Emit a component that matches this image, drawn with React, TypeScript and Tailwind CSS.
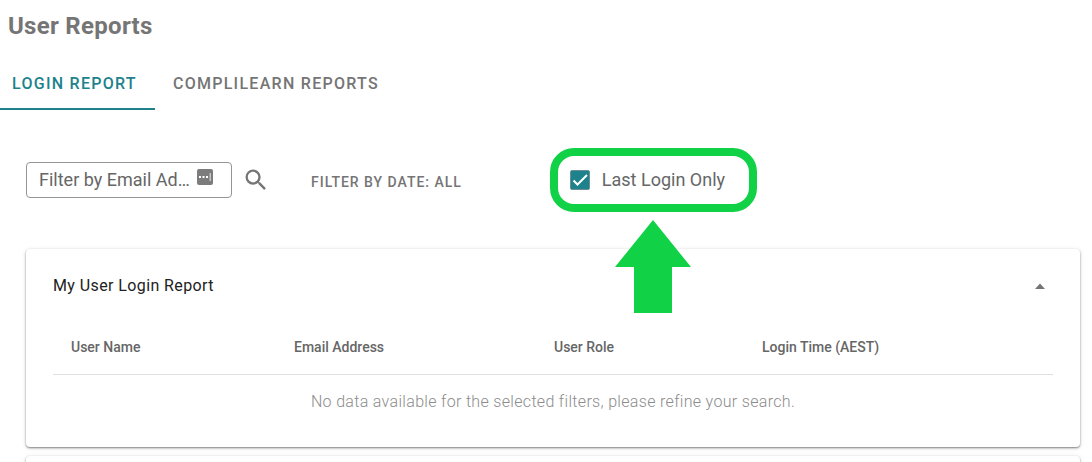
import { useState } from 'react'

const TABS = [
  { key: 'login',       label: 'Login Report' },
  { key: 'complilearn', label: 'Complilearn Reports' },
]

const COLUMNS = [
  { label: 'User Name',         width: 'w-[22.3%]' },
  { label: 'Email Address',     width: 'w-[26%]' },
  { label: 'User Role',         width: 'w-[20.8%]' },
  { label: 'Login Time (AEST)', width: 'w-[30.9%]' },
]

const CARD = 'rounded bg-white shadow-[0_1px_2px_rgba(0,0,0,0.45),0_1px_5px_rgba(0,0,0,0.12)]'

function SearchIcon() {
  return (
    <svg viewBox="0 0 24 24" className="h-7 w-7" fill="currentColor" aria-hidden="true">
      <path d="M15.5 14h-.79l-.28-.27A6.47 6.47 0 0 0 16 9.5 6.5 6.5 0 1 0 9.5 16c1.61 0 3.09-.59 4.23-1.57l.27.28v.79l5 4.99L20.49 19l-4.99-5zm-6 0C7.01 14 5 11.99 5 9.5S7.01 5 9.5 5 14 7.01 14 9.5 11.99 14 9.5 14z" />
    </svg>
  )
}

function AutofillIcon() {
  return (
    <svg viewBox="0 0 16 16" className="mb-1.5 h-4 w-4 shrink-0" aria-hidden="true">
      <rect width="16" height="16" rx="2" fill="#7c7c7c" />
      <path d="M2 7h2v2H2zM5.5 7h2v2h-2zM9 7h2v2H9z" fill="#fff" />
      <path d="M12.5 4H14v8h-1.5z" fill="#c4c4c4" />
    </svg>
  )
}

export default function App() {
  const [tab,       setTab]       = useState('login')
  const [email,     setEmail]     = useState('')
  const [lastLogin, setLastLogin] = useState(true)
  const [open,      setOpen]      = useState(true)

  return (
    <div className="h-screen overflow-hidden bg-white font-[Roboto,'Liberation_Sans',sans-serif] text-[#666]">
      {/* Header */}
      <h1 className="px-2 pt-2 text-2xl leading-9 font-bold tracking-[0.0125em] text-[#757575]">User Reports</h1>

      <div role="tablist" className="mt-4 flex">
        {TABS.map((t) => (
          <button
            key={t.key}
            role="tab"
            aria-selected={tab === t.key}
            onClick={() => setTab(t.key)}
            className={`h-[50px] border-b-2 pr-[18px] pl-3 text-base font-medium tracking-[0.08em] uppercase first:mr-1.5 ${
              tab === t.key ? 'border-[#1d828c] text-[#1d828c]' : 'border-transparent text-[#757575]'
            }`}
          >
            {t.label}
          </button>
        ))}
      </div>

      <div className="pt-[38px] pr-3 pl-[26px]">
        {/* Filters */}
        <div className="flex items-center">
          <div className="flex h-9 w-[206px] items-center rounded border border-[#949494] pr-[18px] pl-3">
            <input
              type="text"
              aria-label="Filter by Email Address"
              placeholder="Filter by Email Address"
              value={email}
              onChange={(e) => setEmail(e.target.value)}
              className="mr-1 min-w-0 flex-1 text-lg text-ellipsis outline-none placeholder:text-[#666]"
            />
            <AutofillIcon />
          </div>
          <button aria-label="Search" className="ml-2.5 text-[#757575]">
            <SearchIcon />
          </button>
          <button className="mt-1 ml-[41px] text-sm font-medium tracking-[0.07em] text-[#757575] uppercase">
            Filter by date: All
          </button>

          {/* Highlighted option with its pointer */}
          <div className="relative ml-[88px] rounded-3xl border-8 border-[#11d246]">
            <label className="flex h-12 items-center gap-3 pr-6 pl-3 text-lg">
              <span className="relative flex h-5 w-5">
                <input
                  type="checkbox"
                  checked={lastLogin}
                  onChange={(e) => setLastLogin(e.target.checked)}
                  className="h-5 w-5 appearance-none rounded-xs border border-[#6b8f94] checked:bg-[#1d828c]"
                />
                {lastLogin && (
                  <svg viewBox="0 0 20 20" className="pointer-events-none absolute inset-0" aria-hidden="true">
                    <path d="M3.5 10.5 7.5 14.5 17 5" fill="none" stroke="#fff" strokeWidth="2" />
                  </svg>
                )}
              </span>
              Last Login Only
            </label>
            <svg
              viewBox="0 0 76 93"
              className="absolute top-full left-1/2 mt-4 h-[93px] w-[76px] -translate-x-1/2"
              aria-hidden="true"
            >
              <path d="M38 0 76 47H57V93H19V47H0z" fill="#11d246" />
            </svg>
          </div>
        </div>

        {/* Report */}
        <section className={`mt-[37px] px-[27px] pt-[17px] pb-6 ${CARD}`}>
          <div className="flex h-10 items-center justify-between">
            <h2 className="text-base tracking-wide text-[#212121]">My User Login Report</h2>
            <button aria-label="Toggle report" aria-expanded={open} onClick={() => setOpen(!open)} className="mr-2">
              <svg viewBox="0 0 10 6" className="h-1.5 w-2.5" aria-hidden="true">
                <path d="M0 6 5 0.5 10 6z" fill="#757575" />
              </svg>
            </button>
          </div>
          {open && (
            <table className="mt-3.5 w-full table-fixed text-left">
              <thead>
                <tr className="h-[54px] border-b border-[#e0e0e0] text-sm">
                  {COLUMNS.map((c) => (
                    <th key={c.label} className={`px-[18px] font-medium ${c.width}`}>{c.label}</th>
                  ))}
                </tr>
              </thead>
              <tbody>
                <tr>
                  <td colSpan={4} className="pt-[15px] pb-[9px] text-center text-base font-light tracking-[0.02em] text-[#8c8c8c]">
                    No data available for the selected filters, please refine your search.
                  </td>
                </tr>
              </tbody>
            </table>
          )}
        </section>
        <section className={`mt-[9px] h-12 ${CARD}`} />
      </div>
    </div>
  )
}
